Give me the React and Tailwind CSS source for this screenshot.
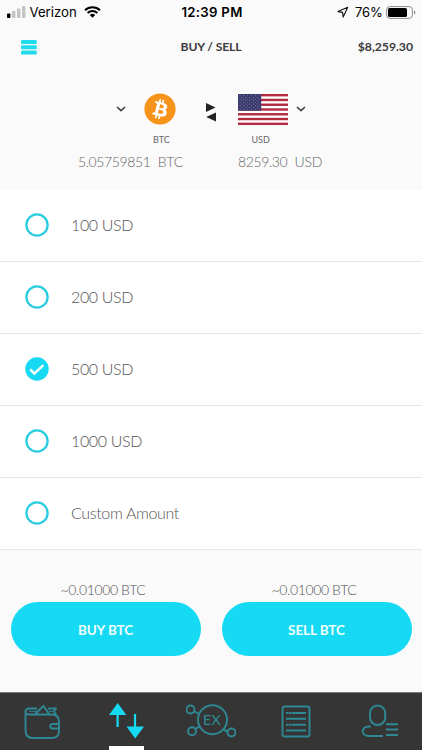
import React from "react";

const options = [
  { label: "100 USD" },
  { label: "200 USD" },
  { label: "500 USD", selected: true },
  { label: "1000 USD" },
  { label: "Custom Amount" },
];

function StatusBar() {
  return (
    <div className="flex h-6 items-center font-['Inter','Liberation_Sans',sans-serif] text-black">
      <div className="flex w-[142px] items-center pl-[7px]">
        <svg width="19" height="12" viewBox="0 0 19 12">
          <rect x="0" y="7.5" width="3.4" height="4.5" rx="0.8" fill="#000" />
          <rect x="5" y="5" width="3.4" height="7" rx="0.8" fill="#c4c4c4" />
          <rect x="10" y="2.5" width="3.4" height="9.5" rx="0.8" fill="#c4c4c4" />
          <rect x="15" y="0" width="3.4" height="12" rx="0.8" fill="#c4c4c4" />
        </svg>
        <span className="ml-[3.5px] w-[48px] whitespace-nowrap text-[13.2px] leading-6">Verizon</span>
        <svg className="ml-[6px]" width="17" height="12" viewBox="0 0 17 12">
          <path d="M1 4.2C5.3.2 11.7.2 16 4.2M3.6 7c2.8-2.6 7-2.6 9.8 0" fill="none" stroke="#000" strokeWidth="2" />
          <path d="M5.8 8.9c1.7-1.4 3.7-1.4 5.4 0L8.5 11.8z" fill="#000" />
        </svg>
      </div>
      <div className="w-[140px] text-center text-[13.2px] font-semibold leading-6 tracking-[0.3px]">12:39 PM</div>
      <div className="flex flex-1 items-center justify-end pr-[6px]">
        <svg width="12" height="12" viewBox="0 0 12 12">
          <path d="M10.7 1.2 1 5.6l4.6.8.6 4.7z" fill="none" stroke="#111" strokeWidth="1.1" strokeLinejoin="round" />
        </svg>
        <span className="ml-[6px] w-[28px] whitespace-nowrap text-[13px] leading-6 tracking-[-0.15px]">76%</span>
        <svg className="ml-[3px]" width="30" height="13" viewBox="0 0 30 13">
          <rect x="0.6" y="0.6" width="25.8" height="11.8" rx="3.2" fill="none" stroke="#8b8b8b" />
          <rect x="2" y="2" width="19" height="9" rx="1.6" fill="#000" />
          <path d="M28 4.5c1.8.5 1.8 3.5 0 4z" fill="#8b8b8b" />
        </svg>
      </div>
    </div>
  );
}

function Header() {
  return (
    <header className="grid h-[47px] grid-cols-[141px_140px_1fr] items-center text-[12.2px] font-bold text-[#3b3b3d]">
      <svg className="ml-[21px]" width="16" height="15" viewBox="0 0 16 15" fill="#20dced">
        <rect x="0" y="0" width="15.8" height="4" rx="1.2" />
        <rect x="0" y="5.3" width="15.8" height="4" rx="1.2" />
        <rect x="0" y="10.6" width="15.8" height="4" rx="1.2" />
      </svg>
      <h1 className="whitespace-nowrap text-center tracking-[-0.15px]">BUY / SELL</h1>
      <span className="pr-[9px] text-right">$8,259.30</span>
    </header>
  );
}

function Chevron() {
  return (
    <svg width="10" height="6" viewBox="0 0 10 6">
      <path d="m1 1 4 3.7L9 1" fill="none" stroke="#3f3f46" strokeWidth="1.6" />
    </svg>
  );
}

function Bitcoin() {
  return (
    <svg width="32" height="32" viewBox="0 0 32 32">
      <circle cx="16" cy="16" r="15.6" fill="#f7931a" />
      <path
        fill="#fff"
        d="M23.19 14.02c.31-2.1-1.28-3.22-3.47-3.98l.71-2.84-1.73-.43-.69 2.77c-.46-.11-.92-.22-1.39-.33l.7-2.79-1.73-.43-.71 2.84c-.38-.09-.75-.17-1.1-.26l-2.39-.6-.46 1.85s1.29.3 1.26.31c.7.18.83.64.81 1.01l-1.98 7.92c-.09.22-.31.54-.81.42.02.02-1.26-.32-1.26-.32l-.86 1.99 2.25.56c.42.11.83.22 1.23.32l-.72 2.88 1.73.43.71-2.85c.47.13.93.25 1.38.36l-.71 2.83 1.73.44.72-2.88c2.95.56 5.17.34 6.1-2.33.75-2.15-.04-3.39-1.59-4.2 1.13-.26 1.98-1 2.21-2.54zm-3.95 5.53c-.53 2.15-4.15.99-5.32.7l.95-3.81c1.17.29 4.93.87 4.37 3.11zm.54-5.56c-.49 1.96-3.5.96-4.48.72l.86-3.45c.98.24 4.13.7 3.62 2.73z"
      />
    </svg>
  );
}

const stripes = [0, 2, 4, 6, 8, 10, 12];
const starRows = [0, 1, 2, 3, 4, 5, 6, 7, 8];

function Flag() {
  return (
    <svg width="50" height="31" viewBox="0 0 50 31.2" preserveAspectRatio="none">
      <rect width="50" height="31.2" fill="#fff" />
      {stripes.map((n) => (
        <rect key={n} y={n * 2.4} width="50" height="2.4" fill="#b22a40" />
      ))}
      <rect width="23.2" height="16.8" fill="#3c3b6e" />
      {starRows.map((row) =>
        (row % 2 ? [0, 1, 2, 3, 4] : [0, 1, 2, 3, 4, 5]).map((col) => (
          <circle key={`${row}-${col}`} cx={2 + col * 3.8 + (row % 2 ? 1.9 : 0)} cy={1.6 + row * 1.7} r="0.42" fill="#b8b8d4" />
        ))
      )}
    </svg>
  );
}

function Exchange() {
  return (
    <section className="grid h-[119px] grid-cols-[200px_22px_200px] text-[#666]">
      <div className="flex flex-col">
        <div className="mt-[22px] flex h-8 items-center pl-[116px]">
          <Chevron />
          <span className="ml-[18px]"><Bitcoin /></span>
        </div>
        <span className="mt-[7px] pl-[153px] text-[9px] leading-4">BTC</span>
        <div className="mt-[4px] flex justify-between whitespace-nowrap pl-[78px] pr-[17px] text-[14px] font-light leading-5">
          <span className="tracking-[-0.4px]">5.05759851</span>
          <span className="tracking-[-0.1px]">BTC</span>
        </div>
      </div>
      <svg className="mt-[31px] ml-[6px]" width="11" height="20" viewBox="0 0 11 20" fill="#222">
        <path d="M0 1v9l9.5-4.5zM10 10.5v9L.2 15z" />
      </svg>
      <div className="flex flex-col">
        <div className="mt-[22px] flex h-8 items-center pl-[16px]">
          <Flag />
          <span className="ml-[8px] flex"><Chevron /></span>
        </div>
        <span className="mt-[7px] pl-[29.5px] text-[9px] leading-4">USD</span>
        <div className="mt-[4px] flex justify-between whitespace-nowrap pl-[16px] pr-[100px] text-[14px] font-light leading-5">
          <span className="tracking-[-0.4px]">8259.30</span>
          <span className="tracking-[-0.3px]">USD</span>
        </div>
      </div>
    </section>
  );
}

function Radio({ selected }) {
  return (
    <svg width="24" height="24" viewBox="0 0 24 24">
      {selected ? (
        <>
          <circle cx="12" cy="12" r="11.7" fill="#16d9f3" />
          <path d="m5.3 12.3 4 4.3 9-8.4" fill="none" stroke="#fff" strokeWidth="2.5" />
        </>
      ) : (
        <circle cx="12" cy="12" r="10.6" fill="none" stroke="#28cde0" strokeWidth="2.3" />
      )}
    </svg>
  );
}

function AmountList() {
  return (
    <ul className="h-[360px] bg-white">
      {options.map((option) => (
        <li key={option.label} className="flex h-[72px] items-center border-b border-[#e7e7e7] pb-px pl-[25px] text-[#555]">
          <Radio selected={option.selected} />
          <span className="ml-[22px] whitespace-nowrap pb-px text-[16px] font-light leading-6 tracking-[-0.4px] last:tracking-[-0.35px]">{option.label}</span>
        </li>
      ))}
    </ul>
  );
}

function Actions() {
  return (
    <section className="grid h-[142px] grid-cols-2 gap-[21px] px-[10.5px] pt-[29px] text-center">
      {["BUY BTC", "SELL BTC"].map((label) => (
        <div key={label}>
          <p className="h-[23px] pr-[5px] text-[14px] font-light leading-[21px] tracking-[-0.38px] text-[#555]">~0.01000 BTC</p>
          <button className="h-[54px] w-full rounded-full bg-[#16d9f3] pt-[2px] text-[13.5px] font-bold tracking-[-0.1px] text-[#f0fdff]">{label}</button>
        </div>
      ))}
    </section>
  );
}

function NavBar() {
  const muted = { fill: "none", stroke: "#2f8995", strokeWidth: 1.9, strokeLinejoin: "round" };
  return (
    <nav className="grid h-[58px] grid-cols-5 border-t border-[#777] bg-[#353535]">
      <div className="flex pl-[24px] pt-[11px]">
        <svg width="37" height="36" viewBox="0 0 37 36" {...muted}>
          <path d="M1.5 6v20c0 5 2.5 8 7 8h19c5 0 7.5-3 7.5-7V18c0-5-2.5-7.5-7-7.5H5C2.7 10.5 1.5 9 1.5 7.5S2.7 4.5 5 4.5h8M24 4.5h8l-2 3 2 3M10.5 10.5l9-8.5 6 8.5M35 20h-6.500c-3 0-3 4.500 0 4.500H35" />
          <path d="M5 7.300h8M25 7.300h4" strokeWidth="1" />
        </svg>
      </div>
      <div className="flex flex-col justify-between pl-[24.6px]">
        <svg className="mt-[9px]" width="35" height="37" viewBox="0 0 35 37">
          <path d="M8.600 12v13M26 12v13" stroke="#16d9f3" strokeWidth="2.200" />
          <path d="M8.700 1 17.300 13H0zM17.500 24.500H35L26.200 36.500z" fill="#16d9f3" />
        </svg>
        <div className="h-[4px] w-[35px] bg-white" />
      </div>
      <div className="flex pl-[17px] pt-[11px]">
        <svg width="50" height="35" viewBox="0 0 50 35" {...muted}>
          <circle cx="26.500" cy="15.700" r="14.500" />
          <circle cx="4.500" cy="5.500" r="4" />
          <circle cx="6" cy="27.300" r="4" />
          <circle cx="45.500" cy="28.500" r="4" />
          <path d="m8.200 7.500 5 2.500M9.500 25l5-3.200M37 25.500l5 2" />
          <text x="26" y="20.500" textAnchor="middle" fill="#2f8995" stroke="#2f8995" strokeWidth="0.15" className="font-['Lato',sans-serif] text-[14px] font-normal tracking-[0.5px]">EX</text>
        </svg>
      </div>
      <div className="flex pl-[28px] pt-[12px]">
        <svg width="30" height="33" viewBox="0 0 30 33" {...muted}>
          <rect x="1.500" y="1.500" width="27" height="30" rx="2" />
          <path d="M5 8h8M5 19.700h8" strokeDasharray="2.500 .5" />
          <path d="M13 8h12M5 13.800h20M13 19.700h12M5 25.500h20" />
        </svg>
      </div>
      <div className="flex pl-[23px] pt-[11px]">
        <svg width="38" height="34" viewBox="0 0 38 34" {...muted}>
          <rect x="9" y="1.500" width="15.200" height="19.500" rx="7.600" />
          <path d="M9.800 22.500H8c-8.500 0-8.500 9.500 0 9.500h14M25 20.200h12M25 25.500h12M25 31h12" />
        </svg>
      </div>
    </nav>
  );
}

export default function App() {
  return (
    <main className="flex h-[750px] w-[422px] flex-col overflow-hidden bg-[#fafafa] font-['Lato','Liberation_Sans',sans-serif]">
      <StatusBar />
      <Header />
      <Exchange />
      <AmountList />
      <Actions />
      <NavBar />
    </main>
  );
}
